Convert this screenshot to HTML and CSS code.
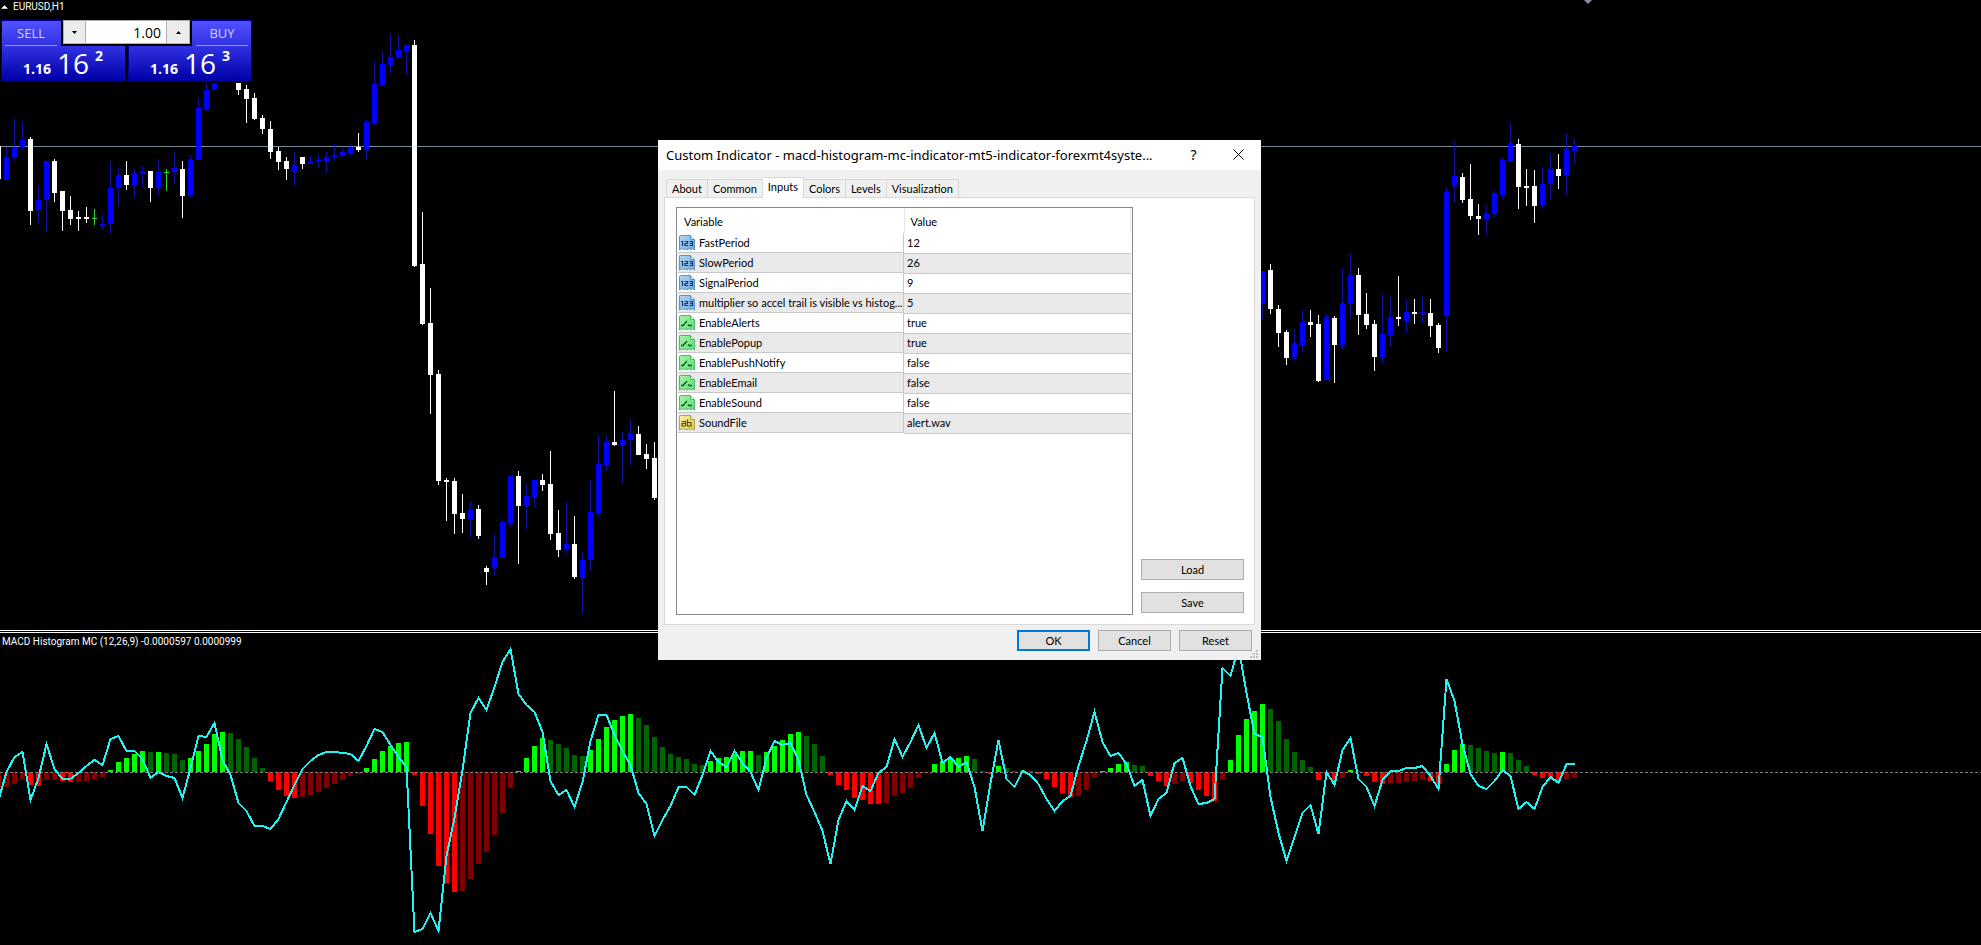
FILE: index.html
```html
<!DOCTYPE html>
<html lang="en">
<head>
<meta charset="utf-8">
<title>EURUSD,H1</title>
<link rel="stylesheet" href="styles.css">
</head>
<body>
<svg class="symbols" aria-hidden="true">
  <defs>
    <linearGradient id="blue" x1="0" y1="0" x2="1" y2="1"><stop offset="0" stop-color="#b4d8f4"/><stop offset="1" stop-color="#6aa6dc"/></linearGradient>
    <linearGradient id="green" x1="0" y1="0" x2="1" y2="1"><stop offset="0" stop-color="#a4f4a4"/><stop offset="1" stop-color="#5fdc78"/></linearGradient>
    <linearGradient id="yellow" x1="0" y1="0" x2="1" y2="1"><stop offset="0" stop-color="#f8f0a8"/><stop offset="1" stop-color="#dcc850"/></linearGradient>
    <path id="sheet" d="M.5 1.5Q.5.5 1.5.5H11.5L15.5 4.5V15L13.5 13.5L12 15L10 13.5L8 15L6 13.5L4.500 15L3 13.5L.5 15Z"/>
    <symbol id="num" viewBox="0 0 16 16">
      <use href="#sheet" fill="url(#blue)" stroke="#5a94c8"/>
      <path d="M11.5.5V4.500H15.500" fill="#d4e8fa" stroke="#5a94c8"/>
      <path d="M2 6.500H3.500V11M5.500 6.500H8.500V8.500H6V10.500H9M10.500 6.500H13.500V10.500H10.500M11 8.500H13" fill="none" stroke="#0c3c78" stroke-width="1.200"/>
    </symbol>
    <symbol id="bool" viewBox="0 0 16 16">
      <use href="#sheet" fill="url(#green)" stroke="#4cb868"/>
      <path d="M11.5.5V4.500H15.500" fill="#c8fad0" stroke="#4cb868"/>
      <path d="M2 10.500H4L8 6M9 9.500L10 10.500H13" fill="none" stroke="#0a5a1c" stroke-width="1.300"/>
    </symbol>
    <symbol id="str" viewBox="0 0 16 16">
      <use href="#sheet" fill="url(#yellow)" stroke="#b8a440"/>
      <path d="M11.5.5V4.500H15.500" fill="#fcf8cc" stroke="#b8a440"/>
      <path d="M2.500 6.500H6.500V11M6.500 8.500H3V11H6.500M8.500 4.500V11H12V7.500H8.500" fill="none" stroke="#5c4c08" stroke-width="1.200"/>
    </symbol>
  </defs>
</svg>

<main class="terminal">
  <section class="pane" aria-label="Price chart">
    <svg class="plot" id="price"></svg>
    <header class="caption"><svg class="tri" viewBox="0 0 8 4"><path d="M4 0L8 4H0Z"/></svg><span>EURUSD,H1</span></header>
    <form class="trade">
      <button type="button" class="deal">
        <span class="side">SELL</span>
        <span class="quote"><b>1.16</b><span class="pips">16</span><b class="point">2</b></span>
      </button>
      <button type="button" class="deal buy">
        <span class="side">BUY</span>
        <span class="quote"><b>1.16</b><span class="pips">16</span><b class="point">3</b></span>
      </button>
      <div class="volume">
        <button type="button" aria-label="Decrease volume"><svg viewBox="0 0 5 3"><path d="M0 0H5L2.500 3Z"/></svg></button>
        <input type="text" value="1.00" aria-label="Volume">
        <button type="button" aria-label="Increase volume"><svg viewBox="0 0 5 3"><path d="M0 3H5L2.500 0Z"/></svg></button>
      </div>
    </form>
    <svg class="shift" viewBox="0 0 8 4"><path d="M0 0H8L4 4Z"/></svg>
  </section>
  <div class="splitter"></div>
  <section class="pane" aria-label="MACD Histogram">
    <svg class="plot" id="macd"></svg>
    <header class="caption macd-caption">MACD Histogram MC (12,26,9) -0.0000597 0.0000999</header>
  </section>
</main>

<div class="dialog" role="dialog" aria-labelledby="dlg-title">
  <header class="titlebar">
    <h1 id="dlg-title">Custom Indicator - macd-histogram-mc-indicator-mt5-indicator-forexmt4syste...</h1>
    <button type="button" aria-label="Help">?</button>
    <button type="button" aria-label="Close"><svg viewBox="0 0 11 11"><path d="M.5.5L10.500 10.500M10.500.5L.5 10.500"/></svg></button>
  </header>
  <div class="tabs" role="tablist">
    <button type="button" role="tab">About</button>
    <button type="button" role="tab">Common</button>
    <button type="button" role="tab" aria-selected="true">Inputs</button>
    <button type="button" role="tab">Colors</button>
    <button type="button" role="tab">Levels</button>
    <button type="button" role="tab">Visualization</button>
  </div>
  <div class="page" role="tabpanel">
    <div class="list">
      <table>
        <thead><tr><th>Variable</th><th>Value</th></tr></thead>
        <tbody>
          <tr><td><svg><use href="#num"/></svg><span>FastPeriod</span></td><td>12</td></tr>
          <tr><td><svg><use href="#num"/></svg><span>SlowPeriod</span></td><td>26</td></tr>
          <tr><td><svg><use href="#num"/></svg><span>SignalPeriod</span></td><td>9</td></tr>
          <tr><td><svg><use href="#num"/></svg><span>multiplier so accel trail is visible vs histog...</span></td><td>5</td></tr>
          <tr><td><svg><use href="#bool"/></svg><span>EnableAlerts</span></td><td>true</td></tr>
          <tr><td><svg><use href="#bool"/></svg><span>EnablePopup</span></td><td>true</td></tr>
          <tr><td><svg><use href="#bool"/></svg><span>EnablePushNotify</span></td><td>false</td></tr>
          <tr><td><svg><use href="#bool"/></svg><span>EnableEmail</span></td><td>false</td></tr>
          <tr><td><svg><use href="#bool"/></svg><span>EnableSound</span></td><td>false</td></tr>
          <tr><td><svg><use href="#str"/></svg><span>SoundFile</span></td><td>alert.wav</td></tr>
        </tbody>
      </table>
    </div>
    <div class="files">
      <button type="button" class="btn">Load</button>
      <button type="button" class="btn">Save</button>
    </div>
  </div>
  <footer class="actions">
    <button type="button" class="btn primary">OK</button>
    <button type="button" class="btn">Cancel</button>
    <button type="button" class="btn">Reset</button>
  </footer>
  <svg class="grip" viewBox="0 0 8 8"><path d="M6 0H8V2H6ZM3 3H5V5H3ZM6 3H8V5H6ZM0 6H2V8H0ZM3 6H5V8H3ZM6 6H8V8H6Z"/></svg>
</div>
<script src="script.js"></script>
</body>
</html>
```
FILE: styles.css
```css
* { box-sizing: border-box; }

body {
  margin: 0;
  background: #000;
  color: #000;
  font-family: Lato, "Liberation Sans", Arial, sans-serif;
  font-size: 11px;
}

button, input { font: inherit; color: inherit; margin: 0; padding: 0; border-radius: 0; }

.symbols { position: absolute; width: 0; height: 0; }

/* Chart window: price pane over indicator pane */
.terminal {
  display: grid;
  grid-template-rows: 630fr 3px 312fr;
  min-height: 100vh;
}

.pane { position: relative; overflow: hidden; }

.plot { position: absolute; inset: 0; width: 100%; height: 100%; }

.splitter { border: solid #fff; border-width: 1px 0; }

.caption {
  position: relative;
  display: flex;
  align-items: center;
  gap: 5px;
  padding: 0 1px;
  height: 13px;
  color: #fff;
  font: 10px/13px Roboto, "Liberation Sans", sans-serif;
}
.macd-caption { padding: 0 2px; height: 17px; }
.tri { width: 7px; height: 4px; fill: #fff; }
.shift { position: absolute; top: 0; left: 80%; width: 8px; height: 4px; margin-left: -1px; fill: #8890a0; }

.price-line { stroke: #778899; }
.zero-line { stroke: #808080; stroke-dasharray: 3 2; }
.trail { fill: none; stroke: #20f4f4; stroke-width: 2; }
.plot path, .plot line, .plot polyline { shape-rendering: crispEdges; }
.wick { stroke-width: 1; }
.body, .bar { stroke-width: 5; }
.up { stroke: #00f; }
.wick.up { stroke: #1010a0; }
.down { stroke: #fff; }
.doji { stroke: #30d030; }
.rise { stroke: #0f0; }
.rise-fade { stroke: #006400; }
.fall { stroke: #f00; }
.fall-fade { stroke: #800000; }

/* One-click trading panel */
.trade {
  position: relative;
  display: grid;
  grid-template-columns: 125px 124px;
  gap: 2px;
  width: 253px;
  margin-top: 6px;
  padding: 1px 0 2px 1px;
  background: #000;
  font-family: "Open Sans", "Noto Sans", sans-serif;
}
.deal {
  display: flex;
  flex-direction: column;
  height: 61px;
  border: 1px solid #0000a0;
  background: linear-gradient(#5050ff, #3030e0 45%, #0000a8);
  color: #fff;
}
.side {
  width: 52px;
  height: 25px;
  margin: 0 3px;
  border-bottom: 1px solid #9090ff;
  color: #d0d0ff;
  font-size: 13px;
  line-height: 24px;
  text-align: center;
}
.buy .side { align-self: flex-end; }
.quote {
  display: flex;
  align-items: baseline;
  gap: 6px;
  padding-left: 21px;
  font-size: 14px;
  line-height: 34px;
}
.pips { font-size: 28px; }
.point { align-self: flex-start; line-height: 20px; }
.volume {
  position: absolute;
  top: 1px;
  left: 61px;
  display: grid;
  grid-template-columns: 23px 1fr 24px;
  width: 131px;
  height: 26px;
  padding: 0 2px 2px;
  background: #000;
}
.volume button { border: 1px solid #b0b0b0; background: #ececec; }
.volume button svg { display: block; width: 5px; height: 3px; margin: 0 auto; }
.volume input {
  min-width: 0;
  border: solid #b0b0b0;
  border-width: 1px 0;
  background: #fff;
  padding: 0 5px;
  font-size: 14px;
  text-align: right;
}

/* Indicator properties dialog */
.dialog {
  position: absolute;
  top: 140px;
  left: 658px;
  width: 603px;
  background: #f0f0f0;
}
.titlebar {
  display: flex;
  align-items: center;
  height: 30px;
  padding-left: 8px;
  background: #fff;
  font-family: "Noto Sans", "Open Sans", sans-serif;
}
.titlebar h1 { flex: 1; margin: 0; font-size: 13px; font-weight: 400; line-height: 30px; white-space: nowrap; }
.titlebar button { width: 45px; height: 28px; margin-bottom: 2px; border: 0; background: none; font-size: 14px; }
.titlebar svg { display: block; width: 11px; height: 11px; margin: 0 auto; fill: none; stroke: #000; }

.tabs { display: flex; align-items: flex-end; height: 27px; padding-left: 8px; }
.tabs button {
  height: 18px;
  padding: 0 5px;
  border: solid #d9d9d9;
  border-width: 1px 1px 0 0;
  background: #f0f0f0;
}
.tabs button:first-child { border-left-width: 1px; }
.tabs button[aria-selected] {
  position: relative;
  z-index: 1;
  height: 21px;
  margin-bottom: -1px;
  padding-bottom: 4px;
  background: #fff;
}
.page {
  display: flex;
  gap: 8px;
  margin: 0 6px;
  padding: 9px 10px 9px 11px;
  border: 1px solid #d9d9d9;
  background: #fff;
}
.list { flex: 1; height: 408px; padding: 1px; border: 1px solid #828790; }
table { width: 100%; border-collapse: collapse; table-layout: fixed; }
th { height: 24px; padding: 0 6px; font-weight: 400; text-align: left; border-right: 1px solid #e5e5e5; }
th:first-child { width: 226px; }
td { height: 20px; padding: 0 3px 1px; border-bottom: 1px solid #c8c8c8; white-space: nowrap; }
td:first-child { display: flex; align-items: center; gap: 4px; padding: 0 1px; border-right: 1px solid #c8c8c8; }
td svg { flex: none; width: 16px; height: 16px; }
tbody tr:nth-child(even) { background: #eaeaea; }
.files { display: flex; flex-direction: column; justify-content: flex-end; gap: 12px; width: 103px; padding-bottom: 2px; }
.btn { height: 21px; border: 1px solid #adadad; background: #e1e1e1; }
.btn.primary { border: 2px solid #0078d7; }
.actions { display: flex; justify-content: flex-end; gap: 8px; padding: 5px 9px 9px; }
.actions .btn { width: 73px; }
.grip { position: absolute; right: 3px; bottom: 2px; width: 8px; height: 8px; fill: #bfbfbf; }
```
FILE: script.js
```js
// Bars are 8px apart; bar n is centred on x = 6.5 + 8n.
const x = n => 6.5 + 8 * n;

// first bar index, then rows of: kind, high, body top, body bottom, low
const candleRuns = [
  [-1, `w 146 146 179 179|b 147 157 180 180|b 119 147 157 161|b 121 140 147 150|w 137 139 211 225|b 185 200 210 223|b 161 161 200 232|w 159 161 193 202|w 191 191 211 231|w 196 210 219 225|w 211 217 219 231|w 207 217 219 223|g 209 218 219 225|b 214 224 226 230|b 161 188 224 234|b 168 175 188 206|w 161 175 185 190|b 170 173 185 197|b 166 171 174 187|w 171 171 188 202|b 159 172 188 196|g 169 172 173 191|b 151 168 172 184|w 161 169 196 218|b 155 159 196 197|b 98 108 160 160|b 83 90 109 112|b 83 83 90 90`],
  [29, `w 83 83 90 95|w 85 89 99 123|w 93 98 119 120|w 115 118 129 134|w 121 129 152 159|w 147 151 162 170|w 157 161 169 180|b 151 165 172 186|w 157 157 164 169|b 156 162 164 164|b 154 160 162 168|b 151 157 161 173|b 144 155 157 161|b 148 152 156 157|b 143 147 153 156|w 133 147 150 152|b 120 122 150 160|b 62 84 123 126|b 51 64 85 85|b 34 57 65 74|b 35 50 58 59|b 44 45 52 75|w 40 45 266 267|w 212 264 324 325|w 288 323 375 414|w 370 374 481 485|w 478 480 482 521|w 478 481 514 534|w 494 513 519 533|b 501 509 519 537|w 505 509 536 539|w 566 568 572 585|b 534 557 568 575|b 519 522 558 558|b 476 476 523 527|w 471 476 506 564|b 483 496 506 529|b 480 480 497 507|w 474 480 485 491|w 451 484 534 540|w 510 533 550 557|b 502 544 550 554|w 516 544 577 579|b 552 560 578 613|b 480 512 560 571|b 435 464 513 517|b 435 442 465 471|w 391 442 445 446|b 432 440 445 484|b 419 433 440 465|w 426 434 455 455|w 444 454 459 469|w 442 458 498 500`],
  [157, `b 271 271 304 319|w 264 270 309 314|w 305 309 333 347|w 330 332 358 365|b 329 343 358 361|b 310 322 345 351|w 310 322 325 337|w 315 324 381 382|b 314 318 380 380|w 316 318 345 383|b 268 303 345 349|b 253 275 304 318|w 268 275 315 335|w 293 314 325 329|w 320 324 357 371|b 294 334 357 364|b 295 317 336 347|w 276 317 319 326|b 299 312 321 333|w 299 312 314 324|b 296 312 314 323|w 299 313 326 337|w 323 325 348 353|b 187 192 316 352|b 141 176 186 203|w 173 177 200 203|w 164 199 216 220|w 204 216 219 235|b 205 213 219 235|b 190 193 214 218|b 157 160 195 199|b 123 143 161 162|w 139 144 187 209|w 169 186 188 206|w 170 186 206 223|b 168 184 205 209|b 153 169 184 199|w 154 169 176 189|b 133 149 176 195|b 139 146 151 164`]
];

// Histogram heights from the zero line, starting at bar -1; "d" marks a fading bar.
const histogram = `-15d -15d -12d -7d -13 -14 -8d -8d -9 -10 -10d -9d -7d -5d 2 10 14 18 21 20d 20 19d 18d 12d 14 21 28 38 40 39d 33d 25d 14d 4d -9 -18 -24 -26 -25d -23d -20d -16d -12d -8d -4d -2d 4 13 21 26 29 30 -3 -34 -62 -94 -111 -120 -119d -107d -92d -80d -63d -41d -16d 1 14 26 34 32d 28d 24d 17d 16d 22 33 45 52 56 58 54d 47d 35d 25d 18d 15d 13d 8d 7d 11 14 15 18 21 21 17d 20 26 32 38 40 36d 28d 16d -3 -13 -18 -26 -28 -32 -32 -31d -24d -21d -16d -6d -1d 8 11 13 14 16 13d 1d -2 6 4d 1d 2d 1d -2 -7 -15 -21 -25 -24d -18d -6d 1 4 8 10 7d 6d -4 -9 -14 -12d -9d -11 -18 -24 -29 -8d 12 37 53 61 68 63d 51d 33d 20d 12d 5d -8 -1 -9 -6d 2 1d -4 -10 -12 -11d -11d -10d -9d -8d -9 -12 8 22 28 27d 24d 21d 19d 20 19d 12d 6d -3 -6 -5 -9 -7d -6d`.split(' ');

// Acceleration trail, window y per bar, starting at bar -1.
const trail = `800 772 757 752 800 778 744 769 779 779 773 766 760 765 739 736 751 751 759 778 772 776 778 798 768 736 737 723 760 775 803 811 826 826 829 819 802 785 769 761 755 752 752 753 754 761 746 729 732 745 757 767 932 929 913 931 856 818 770 713 698 710 687 662 649 694 705 712 732 781 795 790 807 782 741 715 715 735 751 765 793 804 836 820 806 787 787 795 775 751 762 767 751 763 772 790 758 741 745 743 760 795 812 831 864 820 801 810 786 791 773 767 739 757 742 725 748 733 763 757 767 762 787 831 783 740 779 787 771 775 784 799 811 801 796 766 741 712 742 756 753 764 786 780 816 799 793 763 758 786 804 803 799 668 676 647 693 734 737 797 833 861 837 813 805 834 772 785 750 738 779 787 806 780 771 771 768 768 766 776 789 679 701 744 774 786 789 781 770 776 809 802 809 787 777 783 764 764`.split(' ').map(Number);

const PRICE_Y = 146;
const MACD_TOP = 633;
const ZERO_Y = 139;
const path = (cls, d) => `<path class="${cls}" d="${d}"/>`;

const kinds = { w: 'down', b: 'up', g: 'doji' };
let price = `<line class="price-line" x1="0" x2="100%" y1="${PRICE_Y + 0.5}" y2="${PRICE_Y + 0.5}"/>`;
for (const [start, rows] of candleRuns) {
  rows.split('|').forEach((row, k) => {
    const [kind, high, top, bottom, low] = row.split(' ');
    const cx = x(start + k);
    price += path(`wick ${kinds[kind]}`, `M${cx} ${high}V${low}`);
    price += path(`body ${kinds[kind]}`, `M${cx} ${top}V${bottom}`);
  });
}
document.getElementById('price').innerHTML = price;

let macd = '';
histogram.forEach((item, k) => {
  const height = parseInt(item, 10);
  const cls = (height > 0 ? 'rise' : 'fall') + (item.endsWith('d') ? '-fade' : '');
  macd += path(`bar ${cls}`, `M${x(k - 1)} ${ZERO_Y}V${ZERO_Y - height}`);
});
macd += `<line class="zero-line" x1="0" x2="100%" y1="${ZERO_Y + 0.5}" y2="${ZERO_Y + 0.5}"/>`;
macd += `<polyline class="trail" points="${trail.map((y, k) => `${x(k - 1)},${y - MACD_TOP}`).join(' ')}"/>`;
document.getElementById('macd').innerHTML = macd;
```
